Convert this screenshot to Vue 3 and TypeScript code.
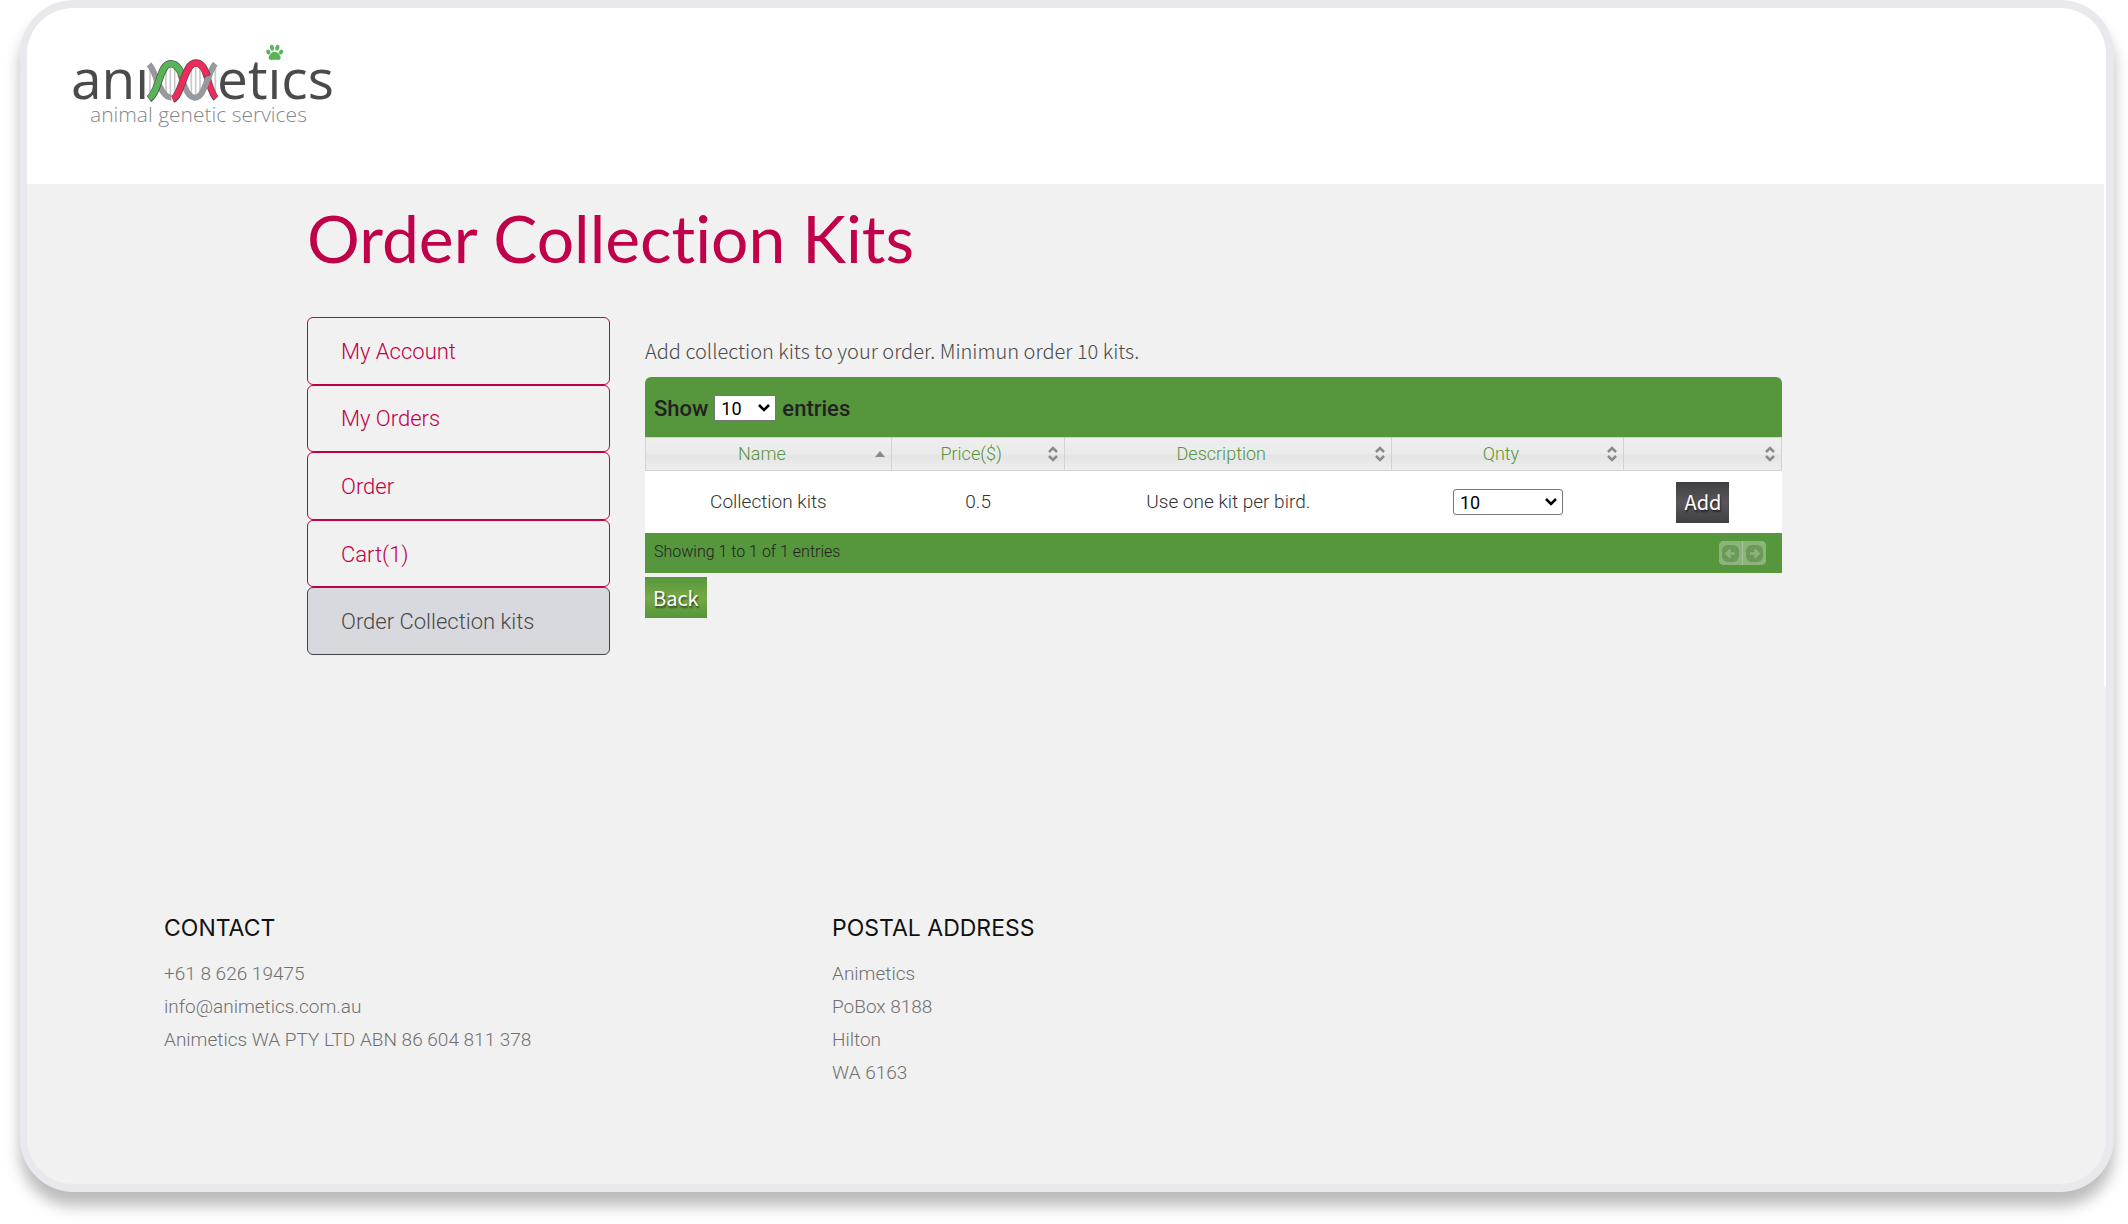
<script setup lang="ts">
import { ref } from 'vue'

interface MenuItem {
  label: string
  active?: boolean
}

interface Column {
  label: string
  sorted?: boolean
}

const menu: MenuItem[] = [
  { label: 'My Account' },
  { label: 'My Orders' },
  { label: 'Order' },
  { label: 'Cart(1)' },
  { label: 'Order Collection kits', active: true },
]

const columns: Column[] = [
  { label: 'Name', sorted: true },
  { label: 'Price($)' },
  { label: 'Description' },
  { label: 'Qnty' },
  { label: '' },
]

const pageSize = ref('10')
const quantity = ref('10')
const address: string[] = ['Animetics', 'PoBox 8188', 'Hilton', 'WA 6163']
const rungs: number[] = [270, 282, 318, 331, 344, 394, 407, 420, 454, 466]
</script>

<template>
  <div class="frame">
    <header class="top">
      <a class="logo" href="#" aria-label="Animetics home">
        <svg width="280" height="100" viewBox="0 0 280 100">
          <g class="wordmark">
            <text x="11" y="64">anı</text>
            <text x="157" y="64">etıcs</text>
          </g>
          <text class="tagline" x="30" y="87">animal genetic services</text>
          <svg width="280" height="100" viewBox="0 0 840 300">
            <g stroke="#c9cacc" stroke-width="5">
              <line v-for="x in rungs" :key="x" :x1="x" y1="96" :x2="x" y2="186" />
            </g>
            <g fill="none" stroke-width="18">
              <path d="M267 88 C290 112 300 188 334 188" stroke="#97999c" />
              <path d="M360 118 C376 156 382 188 405 188" stroke="#97999c" />
              <path d="M436 112 C450 150 454 176 468 190" stroke="#4a4a4c" stroke-width="20" />
              <path d="M437 114 C450 150 454 174 467 188" stroke="#ef2b59" stroke-width="16" />
              <path d="M404 188 C436 188 440 116 466 86" stroke="#97999c" />
              <path d="M267 192 C300 168 298 86 332 86 C352 86 362 108 372 134" stroke="#4a4a4c" stroke-width="22" />
              <path d="M267 190 C300 168 298 86 332 86 C352 86 362 108 371 132" stroke="#59b457" />
              <path d="M338 193 C366 182 372 84 407 84 C426 84 434 102 442 124" stroke="#4a4a4c" stroke-width="22" />
              <path d="M338 191 C366 182 372 84 407 84 C426 84 434 102 441 122" stroke="#ef2b59" />
            </g>
            <g fill="#59b457">
              <ellipse cx="625" cy="51" rx="6" ry="8" transform="rotate(-28 625 51)" />
              <ellipse cx="636" cy="38" rx="6" ry="9" transform="rotate(-8 636 38)" />
              <ellipse cx="652" cy="38" rx="6" ry="9" transform="rotate(12 652 38)" />
              <ellipse cx="663" cy="51" rx="6" ry="8" transform="rotate(32 663 51)" />
              <path d="M644 50 C654 50 660 60 662 67 C663 78 652 74 644 74 C636 74 625 78 626 67 C628 60 634 50 644 50 Z" />
            </g>
          </svg>
        </svg>
      </a>
    </header>

    <main class="main">
      <h1>Order Collection Kits</h1>
      <div class="columns">
        <nav class="menu" aria-label="Account">
          <a v-for="item in menu" :key="item.label" href="#" :class="{ active: item.active }">{{ item.label }}</a>
        </nav>

        <section class="content">
          <p class="intro">Add collection kits to your order. Minimun order 10 kits.</p>
          <div class="bar head">
            <label for="page-size">Show</label>
            <select id="page-size" v-model="pageSize" class="size">
              <option>10</option>
              <option>25</option>
              <option>50</option>
            </select>
            <span>entries</span>
          </div>
          <table>
            <thead>
              <tr>
                <th v-for="(col, i) in columns" :key="i" scope="col">
                  <button type="button" class="sort" :aria-label="col.label || 'Sort'">
                    <span>{{ col.label }}</span>
                    <svg v-if="col.sorted" width="12" height="16" viewBox="0 0 12 16">
                      <path d="M1 11 L6 5 L11 11 Z" fill="#8a8a8a" />
                    </svg>
                    <svg v-else width="12" height="16" viewBox="0 0 12 16">
                      <path d="M2 6 L6 2 L10 6 M2 10 L6 14 L10 10" fill="none" stroke="#8a8a8a" stroke-width="2.500" />
                    </svg>
                  </button>
                </th>
              </tr>
            </thead>
            <tbody>
              <tr>
                <td>Collection kits</td>
                <td>0.5</td>
                <td>Use one kit per bird.</td>
                <td>
                  <select v-model="quantity" class="qty" aria-label="Quantity">
                    <option>10</option>
                    <option>20</option>
                    <option>30</option>
                  </select>
                </td>
                <td><button type="button" class="btn dark">Add</button></td>
              </tr>
            </tbody>
          </table>
          <div class="bar foot">
            <span>Showing 1 to 1 of 1 entries</span>
            <div class="pager">
              <button type="button" aria-label="Previous" disabled>
                <svg width="17" height="17" viewBox="0 0 17 17">
                  <rect width="17" height="17" rx="6" fill="#699a56" />
                  <path d="M13 8.500H5 M8.500 4.500L4.500 8.500L8.500 12.500" fill="none" stroke="#8cb37c" stroke-width="2.500" />
                </svg>
              </button>
              <button type="button" aria-label="Next" disabled>
                <svg width="17" height="17" viewBox="0 0 17 17">
                  <rect width="17" height="17" rx="6" fill="#699a56" />
                  <path d="M4 8.500H12 M8.500 4.500L12.500 8.500L8.500 12.500" fill="none" stroke="#8cb37c" stroke-width="2.500" />
                </svg>
              </button>
            </div>
          </div>
          <button type="button" class="btn green">Back</button>
        </section>
      </div>
    </main>

    <footer class="footer">
      <section>
        <h2>CONTACT</h2>
        <p>+61 8 626 19475</p>
        <p><a href="#">info@animetics.com.au</a></p>
        <p>Animetics WA PTY LTD ABN 86 604 811 378</p>
      </section>
      <section>
        <h2>POSTAL ADDRESS</h2>
        <p v-for="line in address" :key="line">{{ line }}</p>
      </section>
    </footer>
  </div>
</template>

<style>
body {
  background: #fff;
}
</style>

<style scoped>
.frame {
  box-sizing: border-box;
  min-height: calc(100vh - 32px);
  margin: 0 14px 32px 20px;
  border: 8px solid #e9e8ed;
  border-left-width: 7px;
  border-radius: 54px;
  background: #f1f1f1;
  box-shadow: 0 14px 15px rgba(0, 0, 0, 0.27);
  overflow: hidden;
  font-family: Roboto, sans-serif;
  font-weight: 300;
}

.top {
  height: 149px;
  padding: 27px 33px 0;
  background: #fff;
}

.logo,
.logo > svg {
  display: block;
  width: 280px;
}

.wordmark {
  font: 400 55px "Open Sans", sans-serif;
  fill: #4a4a4c;
}

.tagline {
  font: 300 21px "Open Sans", sans-serif;
  fill: #85868a;
}

.main {
  min-height: 488px;
  padding: 14px 322px 0 280px;
  border-right: 2px solid #fff;
}

h1 {
  margin: 0 0 39px;
  color: #c00048;
  font: 400 66px/80px Lato, sans-serif;
  font-variant-ligatures: none;
}

.columns {
  display: flex;
  align-items: flex-start;
  gap: 35px;
}

.menu {
  display: grid;
  flex: 0 0 303px;
  grid-auto-rows: 1fr;
  height: 338px;
}

.menu a {
  display: flex;
  align-items: center;
  box-sizing: border-box;
  padding: 1px 33px 0;
  border: 1px solid #c00048;
  border-radius: 6px;
  color: #c00048;
  font-size: 22px;
  text-decoration: none;
}

.menu a.active {
  border-color: #444;
  background: #d7d9de;
  color: #4a4a4a;
}

.content {
  flex: 1;
  min-width: 0;
}

.intro {
  margin: 8px 0 0;
  color: #4a4a4a;
  font: 300 20px/52px "Noto Sans CJK SC", sans-serif;
}

.bar {
  display: flex;
  align-items: center;
  box-sizing: border-box;
  padding: 0 9px;
  background: #56963c;
  color: #222;
}

.head {
  gap: 6px;
  height: 60px;
  padding-top: 2px;
  border-radius: 6px 6px 0 0;
  font-size: 22px;
  font-weight: 500;
}

select {
  box-sizing: border-box;
  height: 26px;
  padding: 0 6px;
  border: 1px solid #767676;
  appearance: none;
  background: #fff url("data:image/svg+xml,%3Csvg xmlns='http://www.w3.org/2000/svg' width='14' height='10'%3E%3Cpath d='M2 2L7 7L12 2' fill='none' stroke='%23000' stroke-width='2.500'/%3E%3C/svg%3E") no-repeat right 4px center;
  color: #000;
  font: 400 18px Roboto, sans-serif;
}

.size {
  width: 62px;
}

.qty {
  width: 110px;
  border-radius: 3px;
}

table {
  width: 100%;
  border-collapse: separate;
  border-spacing: 0;
  table-layout: fixed;
}

th {
  box-sizing: border-box;
  height: 34px;
  padding: 0;
  border: solid #d3d3d3;
  border-width: 1px 1px 1px 0;
  background: linear-gradient(#eee 0%, #ebebeb 48%, #e4e4e4 56%, #eee 100%);
}

th:first-child {
  width: 21.7%;
  border-left-width: 1px;
}

th:nth-child(2) {
  width: 15.2%;
}

th:nth-child(3) {
  width: 28.8%;
}

th:nth-child(4) {
  width: 20.4%;
}

.sort {
  display: flex;
  align-items: center;
  width: 100%;
  height: 32px;
  padding: 0 5px 1px 4px;
  border: 0;
  background: none;
  color: #56963c;
  font: 300 18px Roboto, sans-serif;
}

.sort span {
  flex: 1;
}

td {
  box-sizing: border-box;
  height: 62px;
  padding: 0 0 2px;
  background: #fff;
  color: #333;
  font-size: 19px;
  text-align: center;
}

td:nth-child(n + 4) {
  padding: 0;
}

.btn {
  display: inline-block;
  height: 41px;
  padding: 0 8px;
  border: 0;
  color: #fff;
  font: 400 20px/40px "Noto Sans CJK SC", sans-serif;
  text-shadow: 1px 2px 2px rgba(0, 0, 0, 0.6);
  vertical-align: middle;
}

.dark {
  background: linear-gradient(#403f41, #575659 50%, #403f41);
}

.green {
  margin-top: 4px;
  background: linear-gradient(#55963b, #76a945 50%, #55963b);
}

.foot {
  justify-content: space-between;
  height: 40px;
  padding: 0 16px 0 9px;
  font-size: 16px;
}

.foot > span {
  padding-bottom: 3px;
}

.pager {
  display: flex;
  gap: 1px;
  background: #a5c498;
  border-radius: 5px;
}

.pager button {
  display: flex;
  align-items: center;
  justify-content: center;
  width: 23px;
  height: 24px;
  padding: 0;
  border: 0;
  border-radius: 5px 0 0 5px;
  background: #8cb37c;
}

.pager button:last-child {
  border-radius: 0 5px 5px 0;
}

.footer {
  display: grid;
  grid-template-columns: repeat(2, 1fr);
  padding: 226px 606px 80px 137px;
  color: #707070;
  font-size: 19px;
  line-height: 33px;
}

.footer h2 {
  margin: 0 0 13px;
  color: #111;
  font: 400 23px/32px Inter, sans-serif;
}

.footer p {
  margin: 0;
}

.footer a {
  color: inherit;
  text-decoration: none;
}
</style>
